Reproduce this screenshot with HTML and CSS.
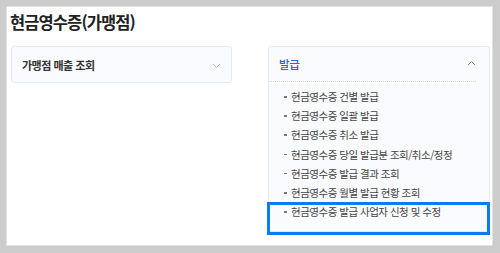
FILE: index.html
```html
<!DOCTYPE html>
<html lang="ko">
<head>
    <meta charset="UTF-8">
    <meta name="viewport" content="width=device-width, initial-scale=1.0">
    <title>현금영수증(가맹점)</title>
    <link rel="stylesheet" href="styles.css">
</head>
<body>

<div class="panel">
    <h1 class="title">현금영수증(가맹점)</h1>

    <div class="menu-grid">
        <!-- closed group -->
        <div class="card">
            <div class="card-head">
                <span class="card-name">가맹점 매출 조회</span>
                <svg class="chev" width="9" height="6" viewBox="0 0 9 6"><path d="M1 1l3.5 3.5L8 1" fill="none" stroke="#b5b9c2" stroke-width="1"/></svg>
            </div>
        </div>

        <!-- open group -->
        <div class="card open">
            <div class="card-head">
                <span class="card-name">발급</span>
                <svg class="chev" width="9" height="6" viewBox="0 0 9 6"><path d="M1 5l3.5-3.5L8 5" fill="none" stroke="#8c919b" stroke-width="1"/></svg>
            </div>
            <ul class="sub-list">
                <li>현금영수증 건별 발급</li>
                <li>현금영수증 일괄 발급</li>
                <li>현금영수증 취소 발급</li>
                <li>현금영수증 당일 발급분 조회/취소/정정</li>
                <li>현금영수증 발급 결과 조회</li>
                <li>현금영수증 월별 발급 현황 조회</li>
                <li class="marked">현금영수증 발급 사업자 신청 및 수정</li>
            </ul>
        </div>
    </div>
</div>

</body>
</html>
```

FILE: styles.css
```css
* { margin: 0; padding: 0; box-sizing: border-box; }
body { font-family: 'Noto Sans CJK KR', 'Noto Sans', sans-serif; background-color: #cccccc; height: 253px; overflow: hidden; }

/* White sheet */
.panel {
    margin: 6px 7px 0 6px;
    height: 240px;
    background-color: #fff;
    border: 1px solid #e2e2e2;
    padding: 2px 2px 0 3px;
}
.title { font-size: 16.5px; font-weight: 600; color: #222; line-height: 26px; letter-spacing: -0.9px; }

/* Two menu cards */
.menu-grid {
    display: grid;
    grid-template-columns: 221px 222px;
    column-gap: 36px;
    align-items: start;
    margin-top: 11px;
    padding-left: 1px;
}
.card {
    background-color: #fafbfe;
    border: 1px solid #e3eaf6;
    border-radius: 3px;
}
.card-head {
    display: flex;
    justify-content: space-between;
    align-items: center;
    height: 35px;
    padding: 0 10px 0 10px;
}
.card-name { font-size: 11px; font-weight: 600; color: #333; letter-spacing: -0.5px; }
.card .chev { margin-top: 2px; }

.open .card-head { margin: 0 13px 0 0; padding-right: 0; border-bottom: 1px dotted #d3d6dc; }
.open .card-name { color: #3563db; font-weight: 500; font-size: 11.5px; letter-spacing: -0.3px; }
.open .chev { margin-top: -3px; }

/* Sub menu list */
.sub-list { list-style: none; padding: 5px 13px 10px 14px; }
.sub-list li {
    position: relative;
    font-size: 10.5px;
    letter-spacing: -0.5px;
    line-height: 19.2px;
    color: #444;
    padding-left: 8px;
}
.sub-list li::before {
    content: '';
    position: absolute;
    left: 1px;
    top: 9px;
    width: 3px;
    height: 1.5px;
    background-color: #777;
}

/* highlight frame on the last item */
.sub-list li.marked::after {
    content: '';
    position: absolute;
    left: -16px;
    right: -14px;
    top: 0;
    height: 27px;
    border: 3px solid #0b7bf5;
}
```
